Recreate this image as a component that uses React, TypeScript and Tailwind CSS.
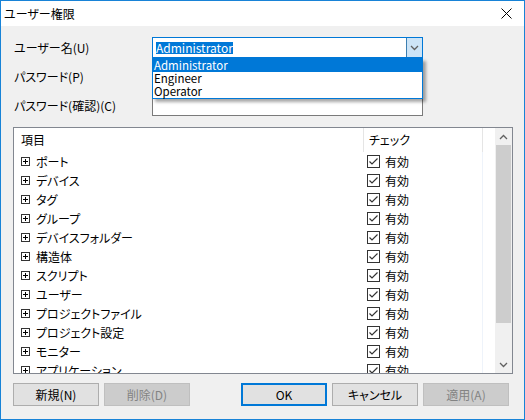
import React from 'react';

const font = '[font-family:"Noto_Sans_CJK_JP",sans-serif] [font-feature-settings:"palt"]';

const items = [
  'ポート',
  'デバイス',
  'タグ',
  'グループ',
  'デバイスフォルダー',
  '構造体',
  'スクリプト',
  'ユーザー',
  'プロジェクトファイル',
  'プロジェクト設定',
  'モニター',
  'アプリケーション',
];

const users = ['Administrator', 'Engineer', 'Operator'];

// small expand box used by every tree row
const PlusBox = () => (
  <svg width="9" height="9" viewBox="0 0 9 9" className="shrink-0">
    <rect x="0.5" y="0.5" width="8" height="8" fill="white" stroke="#333" />
    <path d="M2 4.5h5M4.5 2v5" stroke="#000" />
  </svg>
);

const CheckBox = () => (
  <svg width="13" height="13" viewBox="0 0 13 13" className="shrink-0">
    <rect x="0.5" y="0.5" width="12" height="12" fill="white" stroke="#333" />
    <path d="M2.5 6.5L5 9l5.5-5.5" fill="none" stroke="#333" strokeWidth="1.2" />
  </svg>
);

const Chevron = ({ up = false }: { up?: boolean }) => (
  <svg width="9" height="6" viewBox="0 0 9 6">
    <path
      d={up ? 'M1 5l3.5-3.5L8 5' : 'M1 1l3.5 3.5L8 1'}
      fill="none"
      stroke="#606060"
      strokeWidth="1.3"
    />
  </svg>
);

const Button = ({ label, disabled = false, primary = false }: { label: string; disabled?: boolean; primary?: boolean }) => (
  <div
    className={
      'w-[86px] h-[23px] flex items-center justify-center text-[12px] ' +
      (disabled
        ? 'bg-[#cccccc] border border-[#bfbfbf] text-[#838383]'
        : primary
        ? 'bg-[#e1e1e1] border-2 border-[#0078d7] text-black'
        : 'bg-[#e1e1e1] border border-[#adadad] text-black')
    }
  >
    {label}
  </div>
);

export default function App() {
  return (
    <div className={`w-[525px] h-[420px] flex flex-col border border-[#1883d7] bg-[#f0f0f0] text-black text-[12px] ${font}`}>
      {/* title bar */}
      <div className="h-[25px] bg-white flex items-center justify-between pl-[3px] pr-[12px] shrink-0">
        <span className="text-[12px] leading-none">ユーザー権限</span>
        <svg width="11" height="11" viewBox="0 0 11 11">
          <path d="M0.5 0.5l10 10M10.5 0.5l-10 10" stroke="#000" strokeWidth="1" />
        </svg>
      </div>

      <div className="flex-1 px-[12px] pt-[11px]">
        {/* form */}
        <div className="grid grid-cols-[139px_271px] auto-rows-[21px] gap-y-[8px]">
          <div className="flex items-center pl-[1px]">ユーザー名(U)</div>
          <div className="relative">
            <div className="h-full flex border border-[#0078d7] bg-white">
              <div className="flex-1 flex items-center pl-[3px]">
                <span className="bg-[#0078d7] text-white h-[12px] flex items-center leading-none">Administrator</span>
              </div>
              <div className="w-[16px] bg-[#cce4f7] border-l border-[#3c7fb1] flex items-center justify-center">
                <Chevron />
              </div>
            </div>
            {/* open dropdown */}
            <div className="absolute left-0 top-[21px] w-[271px] border border-[#0078d7] bg-white shadow-[3px_3px_3px_rgba(0,0,0,0.35)] z-10">
              {users.map((u, i) => (
                <div
                  key={u}
                  className={'h-[13px] flex items-center pl-[1px] text-[11.5px] leading-[13px] ' + (i === 0 ? 'bg-[#0078d7] text-white' : '')}
                >
                  {u}
                </div>
              ))}
            </div>
          </div>

          <div className="flex items-center pl-[1px]">パスワード(P)</div>
          <div className="border border-[#7a7a7a] bg-white" />

          <div className="flex items-center pl-[1px]">パスワード(確認)(C)</div>
          <div className="border border-[#7a7a7a] bg-white" />
        </div>

        {/* permission list */}
        <div className="mt-[11px] w-[500px] h-[247px] border border-[#828790] bg-white flex overflow-hidden">
          <div className="flex-1 flex flex-col overflow-hidden">
            <div className="h-[24px] shrink-0 flex">
              <div className="w-[349px] flex items-center pl-[7px]">項目</div>
              <div className="w-px bg-[#e5e5e5]" />
              <div className="w-[118px] flex items-center pl-[5px]">チェック</div>
              <div className="w-px bg-[#e5e5e5]" />
            </div>
            {items.map((name) => (
              <div key={name} className="h-[19px] shrink-0 flex">
                <div className="w-[350px] flex items-center pl-[7px] gap-[6px]">
                  <PlusBox />
                  <span className="whitespace-nowrap">{name}</span>
                </div>
                <div className="w-[118px] flex items-center pl-[3px] gap-[5px]">
                  <CheckBox />
                  <span>有効</span>
                </div>
                <div className="w-px bg-[#eef3fa]" />
              </div>
            ))}
          </div>

          {/* scrollbar */}
          <div className="w-[17px] bg-[#f0f0f0] flex flex-col shrink-0">
            <div className="h-[17px] flex items-center justify-center">
              <Chevron up />
            </div>
            <div className="flex-1">
              <div className="h-[178px] mx-[1px] bg-[#cdcdcd]" />
            </div>
            <div className="h-[17px] flex items-center justify-center">
              <Chevron />
            </div>
          </div>
        </div>

        {/* buttons */}
        <div className="mt-[9px] flex">
          <div className="flex gap-[5px]">
            <Button label="新規(N)" />
            <Button label="削除(D)" disabled />
          </div>
          <div className="flex gap-[5px] ml-[51px]">
            <Button label="OK" primary />
            <Button label="キャンセル" />
            <Button label="適用(A)" disabled />
          </div>
        </div>
      </div>
    </div>
  );
}
